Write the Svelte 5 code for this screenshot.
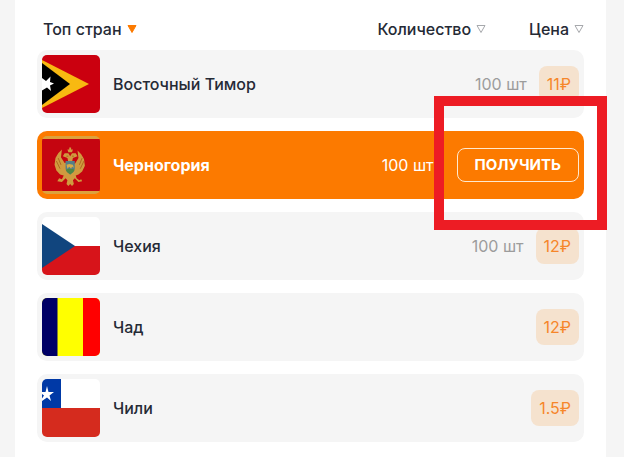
<script>
  const rows = [
    { id: 'tl', name: 'Восточный Тимор', count: '100 шт', price: '11₽' },
    { id: 'me', name: 'Черногория', count: '100 шт', active: true },
    { id: 'cz', name: 'Чехия', count: '100 шт', price: '12₽' },
    { id: 'td', name: 'Чад', price: '12₽' },
    { id: 'cl', name: 'Чили', price: '1.5₽' }
  ];
</script>

{#snippet flag(id)}
  <svg class="flag" viewBox="0 0 58 58" aria-hidden="true">
    {#if id === 'tl'}
      <rect width="58" height="58" fill="#cb000f" />
      <path d="M0 5 47 29 0 53z" fill="#f8b911" />
      <path d="M0 8 28 29 0 50z" fill="#000" />
      <path d="M8.500 21.500 8 27 12 28.500 8 30.500 9 36 5 32.500 0 35.500V23L4 26z" fill="#fff" />
    {:else if id === 'me'}
      <rect width="58" height="58" fill="#dca23c" />
      <rect y="3" width="58" height="52" fill="#c50510" />
      <g transform="translate(1.500 1) scale(.92 .96)">
        <g fill="#d09a3f">
          <path d="M28 11h2v2h2l-1 3h-4l-1-3h2z" />
          <path d="M27 26 26 22 21 20 23 17h4l2 3 2-3h4l2 3-5 2-1 4 3 2 4-6-1-8 4 4 3 5 1 7-3 6-4 3-3 1 1 3 3 2 2-1 1 2-4 1-4-4-2 2 1 4-2 2-2-2-2 2-2-2 1-4-2-2-4 4-5-1 2-3 3 1 2-4-4-1-4-4-2-6 1-7 3-5 4-4-1 8 4 6z" />
        </g>
        <path d="m16 22 3 7M14 25l4 8M42 22l-3 7M44 25l-4 8M25 20h2M31 20h2" stroke="#ad651f" fill="none" />
        <path d="M24 25h10v8q-1 4-5 6-4-2-5-6z" fill="#557f88" />
        <path d="M24 34q5-2 10 0-1 3-5 5-4-2-5-5z" fill="#4e8745" />
        <path d="m25 29 3-1 4 1 1 3-2-1-1 2-2-2-2 2z" fill="#d7ab48" />
      </g>
    {:else if id === 'cz'}
      <rect width="58" height="58" fill="#fff" />
      <path d="M0 29h58v29H0z" fill="#d7141a" />
      <path d="m0 7 33 22L0 51z" fill="#11457e" />
    {:else if id === 'td'}
      <rect width="58" height="58" fill="#ff0" />
      <path d="M0 0h15.500v58H0z" fill="#006" />
      <path d="M41 0h17v58H41z" fill="#f00" />
    {:else}
      <rect width="58" height="58" fill="#fff" />
      <path d="M0 0h19v29H0z" fill="#0039a6" />
      <path d="M0 29h58v29H0z" fill="#d52b1e" />
      <path d="m5 7 1.500 6H12l-4.500 3.500L9 22l-4-3.500L0 22v-2.500l2-3L0 15v-2h3.500z" fill="#fff" />
    {/if}
  </svg>
{/snippet}

{#snippet arrow(on)}
  <svg class="arrow" class:on viewBox="0 0 10 10" aria-hidden="true">
    <path d="M1 1.500h8L5 8.500z" />
  </svg>
{/snippet}

<main class="panel">
  <header>
    <button class="sort first">Топ стран {@render arrow(true)}</button>
    <button class="sort">Количество {@render arrow(false)}</button>
    <button class="sort">Цена {@render arrow(false)}</button>
  </header>
  <ul>
    {#each rows as row (row.id)}
      <li class:active={row.active}>
        {@render flag(row.id)}
        <span class="name">{row.name}</span>
        {#if row.count}<span class="count">{row.count}</span>{/if}
        {#if row.active}
          <button class="get">ПОЛУЧИТЬ</button>
          <div class="marker"></div>
        {:else}
          <span class="price">{row.price}</span>
        {/if}
      </li>
    {/each}
  </ul>
</main>

<style>
  :global(body) {
    margin: 0;
    background: #f5f5f5;
  }
  .panel {
    box-sizing: border-box;
    min-height: 100vh;
    margin: 0 18px 0 15px;
    padding: 17px 22px 14px;
    background: #fff;
    color: #252a35;
    font-family: Inter, "Noto Sans", sans-serif;
    font-size: 16px;
    line-height: 24px;
  }
  button {
    font: inherit;
    color: inherit;
    cursor: pointer;
  }
  header {
    display: flex;
    gap: 43px;
    padding-left: 6px;
    margin-bottom: 9px;
  }
  .sort {
    display: flex;
    align-items: center;
    gap: 5px;
    padding: 0;
    border: 0;
    background: none;
    font-weight: 500;
  }
  .first {
    margin-right: auto;
  }
  .arrow {
    width: 10px;
    height: 10px;
    fill: none;
    stroke: #a6a8ac;
  }
  .arrow.on {
    fill: #fc7a00;
    stroke: #fc7a00;
  }
  ul {
    display: flex;
    flex-direction: column;
    gap: 13px;
    margin: 0;
    padding: 0;
    list-style: none;
  }
  li {
    position: relative;
    display: flex;
    align-items: center;
    padding: 5px;
    border-radius: 10px;
    background: #f5f5f5;
  }
  .flag {
    width: 58px;
    height: 58px;
    margin-right: 13px;
    border-radius: 5px;
  }
  .name {
    flex: 1;
    font-weight: 500;
  }
  .count {
    margin-right: 12px;
    color: #9c9c9c;
  }
  .price {
    padding: 6px 8px;
    border-radius: 8px;
    background: #f5e2ce;
    color: #f6862a;
  }
  .active {
    background: #fc7a00;
    color: #fff;
  }
  .active .name {
    font-weight: 700;
  }
  .active .count {
    margin-right: 23px;
    color: #fff;
  }
  .get {
    padding: 4px 17px;
    border: 1px solid #ffe9cf;
    border-radius: 8px;
    background: none;
    font-size: 15px;
    font-weight: 700;
  }
  .marker {
    position: absolute;
    inset: -35px -23px -31px auto;
    width: 153px;
    border: 10px solid #ed1c24;
    pointer-events: none;
    z-index: 1;
  }
</style>
